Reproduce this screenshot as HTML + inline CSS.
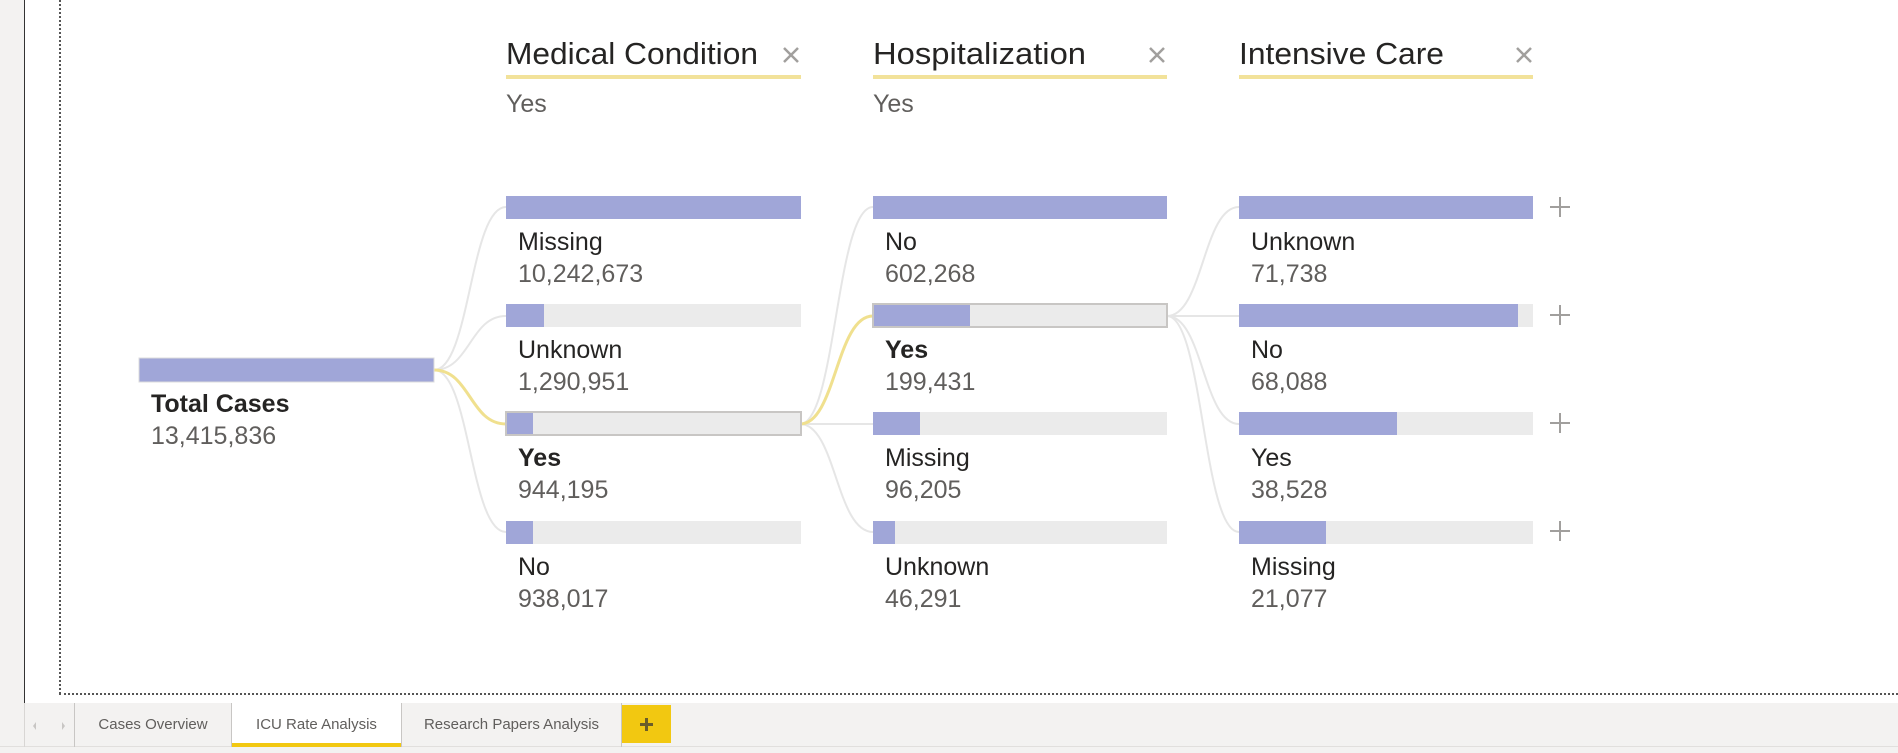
<!DOCTYPE html>
<html><head><meta charset="utf-8"><style>
html,body{margin:0;padding:0;width:1898px;height:753px;overflow:hidden;background:#fff;font-family:"Liberation Sans",sans-serif}
.abs{position:absolute}
.tab{font-family:"Liberation Sans",sans-serif;font-size:15px;color:#605e5c;text-align:center}
</style></head><body>
<div class="abs" style="left:0;top:0;width:24px;height:703px;background:#f3f2f1;border-right:1px solid #333"></div>
<div class="abs" style="left:59px;top:0;width:0;height:694px;border-left:2px dotted #555"></div>
<div class="abs" style="left:59px;top:693px;width:1839px;height:0;border-top:2px dotted #555"></div>
<div class="abs" style="left:0;top:703px;width:1898px;height:50px;background:#f3f2f1"></div>
<div class="abs" style="left:0;top:746px;width:1898px;height:1px;background:#e1dfdd"></div>
<div class="abs" style="left:24px;top:703px;width:1px;height:44px;background:#d8d6d4"></div>
<div class="abs" style="left:74px;top:703px;width:1px;height:44px;background:#c8c6c4"></div>
<div class="abs" style="left:231px;top:703px;width:1px;height:44px;background:#c8c6c4"></div>
<div class="abs" style="left:401px;top:703px;width:1px;height:44px;background:#c8c6c4"></div>
<div class="abs" style="left:621px;top:703px;width:1px;height:44px;background:#c8c6c4"></div>
<svg class="abs" style="left:24px;top:703px" width="50" height="44"><path d="M12 19 L9 23 L12 27Z" fill="#c8c6c4"/><path d="M38 19 L41 23 L38 27Z" fill="#c8c6c4"/></svg>
<div class="abs tab" style="left:75px;top:716px;width:156px">Cases Overview</div>
<div class="abs" style="left:232px;top:703px;width:169px;height:40px;background:#fff"></div>
<div class="abs" style="left:232px;top:743px;width:169px;height:4px;background:#f2c811"></div>
<div class="abs tab" style="left:232px;top:716px;width:169px">ICU Rate Analysis</div>
<div class="abs tab" style="left:402px;top:716px;width:219px">Research Papers Analysis</div>
<div class="abs" style="left:622px;top:705px;width:49px;height:38px;background:#f2c811"></div>
<svg class="abs" style="left:622px;top:705px" width="49" height="38"><path d="M24.5 13 V26 M18 19.5 H31" stroke="#6b5d2a" stroke-width="3"/></svg>

<svg class="abs" style="left:0;top:0" width="1898" height="700" font-family="Liberation Sans, sans-serif">
<g fill="none" stroke="#e6e6e6" stroke-width="2">
<path d="M434 370 C470 370 470 207 506 207"/>
<path d="M434 370 C470 370 470 316 506 316"/>
<path d="M434 370 C470 370 470 532 506 532"/>
<path d="M800 424 C836 424 836 207 873 207"/>
<path d="M800 424 L873 424"/>
<path d="M800 424 C836 424 836 532 873 532"/>
<path d="M1167 316 C1203 316 1203 207 1239 207"/>
<path d="M1167 316 L1239 316"/>
<path d="M1167 316 C1203 316 1203 424 1239 424"/>
<path d="M1167 316 C1203 316 1203 532 1239 532"/>
</g>
<g fill="none" stroke="#f0e08e" stroke-width="3">
<path d="M434 370 C470 370 470 424 506 424"/>
<path d="M800 424 C836 424 836 316 873 316"/>
</g>
<g font-size="31" fill="#252423">
<text x="506" y="64" textLength="252" lengthAdjust="spacingAndGlyphs">Medical Condition</text>
<text x="873" y="64" textLength="213" lengthAdjust="spacingAndGlyphs">Hospitalization</text>
<text x="1239" y="64" textLength="205" lengthAdjust="spacingAndGlyphs">Intensive Care</text>
</g>
<g stroke="#a19f9d" stroke-width="2.5">
<path d="M784 48 L798 62 M798 48 L784 62"/>
<path d="M1150 48 L1164 62 M1164 48 L1150 62"/>
<path d="M1517 48 L1531 62 M1531 48 L1517 62"/>
</g>
<g fill="#f2e29a">
<rect x="506" y="75" width="295" height="4"/>
<rect x="873" y="75" width="294" height="4"/>
<rect x="1239" y="75" width="294" height="4"/>
</g>
<g font-size="25" fill="#605e5c">
<text x="506" y="112">Yes</text>
<text x="873" y="112">Yes</text>
</g>
<rect x="139" y="358" width="295" height="24" fill="#a0a6d8" stroke="#dcdcdc" stroke-width="1"/>
<g font-size="25">
<text x="151" y="412" font-weight="bold" fill="#252423">Total Cases</text>
<text x="151" y="444" fill="#605e5c">13,415,836</text>
</g>
<g>
<rect x="506" y="196" width="295" height="23" fill="#a0a6d8"/>
<rect x="506" y="304" width="295" height="23" fill="#ebebeb"/><rect x="506" y="304" width="38" height="23" fill="#a0a6d8"/>
<rect x="506" y="412" width="295" height="23" fill="#ebebeb"/><rect x="506" y="412" width="27" height="23" fill="#a0a6d8"/>
<rect x="506" y="412" width="295" height="23" fill="none" stroke="#c8c6c4" stroke-width="2"/>
<rect x="506" y="521" width="295" height="23" fill="#ebebeb"/><rect x="506" y="521" width="27" height="23" fill="#a0a6d8"/>
</g>
<g font-size="25">
<text x="518" y="250" fill="#252423">Missing</text><text x="518" y="282" fill="#605e5c">10,242,673</text>
<text x="518" y="358" fill="#252423">Unknown</text><text x="518" y="390" fill="#605e5c">1,290,951</text>
<text x="518" y="466" fill="#252423" font-weight="bold">Yes</text><text x="518" y="498" fill="#605e5c">944,195</text>
<text x="518" y="575" fill="#252423">No</text><text x="518" y="607" fill="#605e5c">938,017</text>
</g>
<g>
<rect x="873" y="196" width="294" height="23" fill="#a0a6d8"/>
<rect x="873" y="304" width="294" height="23" fill="#ebebeb"/><rect x="873" y="304" width="97" height="23" fill="#a0a6d8"/>
<rect x="873" y="304" width="294" height="23" fill="none" stroke="#c8c6c4" stroke-width="2"/>
<rect x="873" y="412" width="294" height="23" fill="#ebebeb"/><rect x="873" y="412" width="47" height="23" fill="#a0a6d8"/>
<rect x="873" y="521" width="294" height="23" fill="#ebebeb"/><rect x="873" y="521" width="22" height="23" fill="#a0a6d8"/>
</g>
<g font-size="25">
<text x="885" y="250" fill="#252423">No</text><text x="885" y="282" fill="#605e5c">602,268</text>
<text x="885" y="358" fill="#252423" font-weight="bold">Yes</text><text x="885" y="390" fill="#605e5c">199,431</text>
<text x="885" y="466" fill="#252423">Missing</text><text x="885" y="498" fill="#605e5c">96,205</text>
<text x="885" y="575" fill="#252423">Unknown</text><text x="885" y="607" fill="#605e5c">46,291</text>
</g>
<g>
<rect x="1239" y="196" width="294" height="23" fill="#a0a6d8"/>
<rect x="1239" y="304" width="294" height="23" fill="#ebebeb"/><rect x="1239" y="304" width="279" height="23" fill="#a0a6d8"/>
<rect x="1239" y="412" width="294" height="23" fill="#ebebeb"/><rect x="1239" y="412" width="158" height="23" fill="#a0a6d8"/>
<rect x="1239" y="521" width="294" height="23" fill="#ebebeb"/><rect x="1239" y="521" width="87" height="23" fill="#a0a6d8"/>
</g>
<g font-size="25">
<text x="1251" y="250" fill="#252423">Unknown</text><text x="1251" y="282" fill="#605e5c">71,738</text>
<text x="1251" y="358" fill="#252423">No</text><text x="1251" y="390" fill="#605e5c">68,088</text>
<text x="1251" y="466" fill="#252423">Yes</text><text x="1251" y="498" fill="#605e5c">38,528</text>
<text x="1251" y="575" fill="#252423">Missing</text><text x="1251" y="607" fill="#605e5c">21,077</text>
</g>
<g stroke="#a19f9d" stroke-width="2">
<path d="M1560 197 V217 M1550 207 H1570"/>
<path d="M1560 305 V325 M1550 315 H1570"/>
<path d="M1560 413 V433 M1550 423 H1570"/>
<path d="M1560 521 V541 M1550 531 H1570"/>
</g>
</svg>
</body></html>
